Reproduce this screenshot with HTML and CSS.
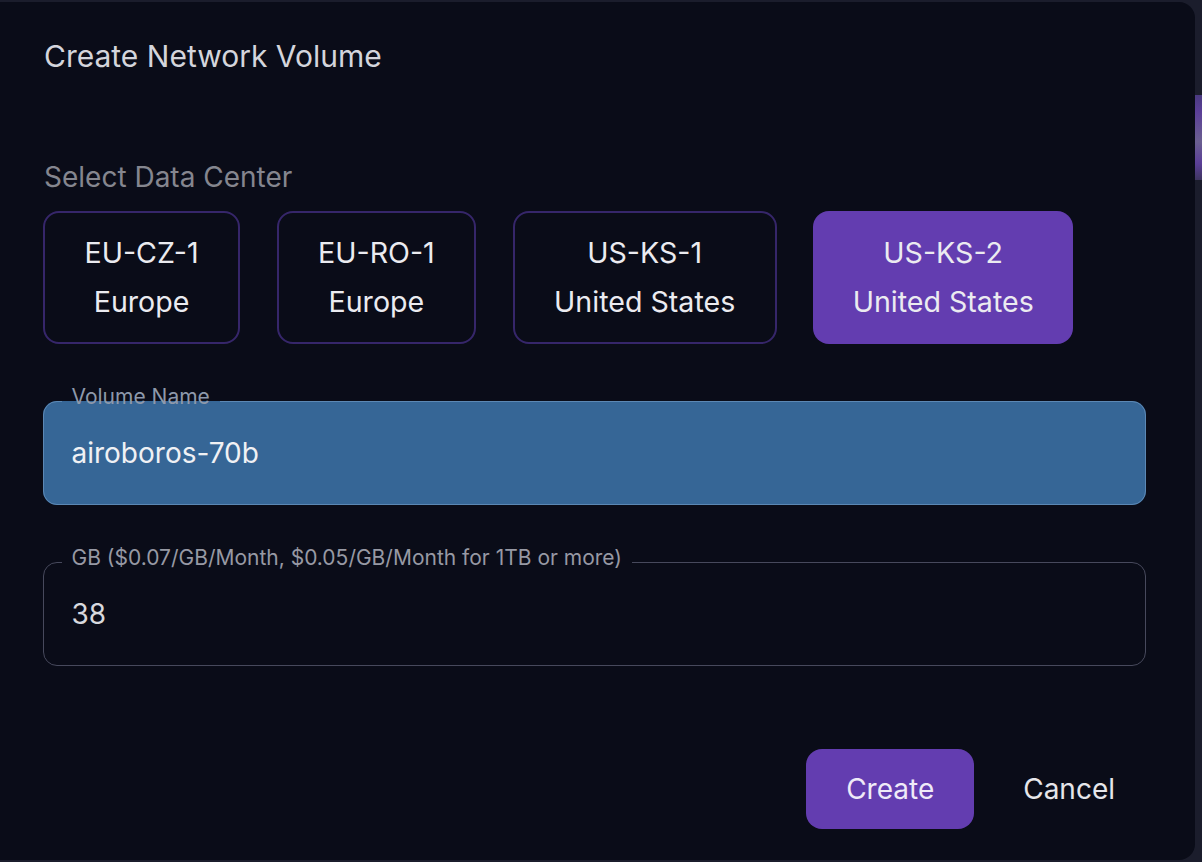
FILE: index.html
```html
<!DOCTYPE html>
<html lang="en">
<head>
<meta charset="utf-8">
<title>Create Network Volume</title>
<link rel="stylesheet" href="styles.css">
</head>
<body>
<div class="page">
  <div class="dialog">
    <h2 class="title">Create Network Volume</h2>
    <div class="section-label">Select Data Center</div>
    <div class="dc-list">
      <button class="dc"><span>EU-CZ-1</span><span>Europe</span></button>
      <button class="dc"><span>EU-RO-1</span><span>Europe</span></button>
      <button class="dc"><span>US-KS-1</span><span>United States</span></button>
      <button class="dc dc-selected"><span>US-KS-2</span><span>United States</span></button>
    </div>
    <fieldset class="field field-filled">
      <legend>Volume Name</legend>
      <div class="value">airoboros-70b</div>
    </fieldset>
    <fieldset class="field field-outline">
      <legend>GB ($0.07/GB/Month, $0.05/GB/Month for 1TB or more)</legend>
      <div class="value">38</div>
    </fieldset>
    <div class="actions">
      <button class="btn btn-primary">Create</button>
      <button class="btn btn-text">Cancel</button>
    </div>
  </div>
  <div class="side">
    <div class="glow"></div>
  </div>
</div>
</body>
</html>
```

FILE: styles.css
```css
* { box-sizing: border-box; }

html, body {
  margin: 0;
  padding: 0;
  background: #1b1d2c;
  font-family: Inter, "Noto Sans", "Liberation Sans", sans-serif;
}

.page {
  display: flex;
  width: 1202px;
  height: 862px;
  overflow: hidden;
}

.dialog {
  width: 1195px;
  flex: none;
  margin-top: 2px;
  height: 858px;
  background: #0a0c18;
  border-radius: 0 16px 16px 0;
  padding: 36px 49px 0 43px;
  display: flex;
  flex-direction: column;
}

.title {
  margin: 0 0 0 1px;
  font-size: 30px;
  line-height: 36px;
  font-weight: 400;
  color: #d4d5dc;
}

.section-label {
  margin: 88px 0 0 1px;
  font-size: 28px;
  line-height: 30px;
  color: #85868f;
}

.dc-list {
  display: flex;
  gap: 36.4px;
  margin-top: 19px;
}

.dc {
  display: flex;
  flex-direction: column;
  align-items: center;
  font-family: inherit;
  font-size: 28.6px;
  line-height: 49px;
  color: #ebebf0;
  background: transparent;
  border: 2px solid #36266a;
  border-radius: 16px;
  padding: 15px 39.5px 16px;
  cursor: pointer;
}

.dc-selected {
  background: #633db0;
  border: 0;
  padding: 17px 39.5px 18px;
}

.field {
  margin: 0;
  border-radius: 14px;
  padding: 21px 27.5px 36px;
  min-width: 0;
}

.field legend {
  font-size: 21px;
  line-height: 24px;
  padding: 0 10px 8px;
  margin-left: -10px;
}

.field-filled {
  margin-top: 41px;
  background: #366696;
  border: 1.5px solid #5c88b4;
}

.field-filled legend {
  color: #8e99ab;
}

.field-outline {
  margin-top: 41px;
  background: transparent;
  border: 1.5px solid #47495c;
}

.field-outline legend {
  color: #9799a4;
}

.value {
  font-size: 28px;
  line-height: 30px;
  color: #f0f1f4;
}

.field-outline .value {
  color: #d8d9de;
}

.actions {
  display: flex;
  justify-content: flex-end;
  gap: 10px;
  margin-top: 83px;
}

.btn {
  height: 80px;
  font-family: inherit;
  font-size: 28px;
  border: none;
  border-radius: 16px;
  cursor: pointer;
}

.btn-primary {
  width: 168px;
  background: #633db0;
  color: #efeaf8;
  padding: 0;
}

.btn-text {
  background: transparent;
  color: #e6e6ea;
  padding: 0 31px 0 39px;
}

.side {
  flex: 1;
  display: flex;
  flex-direction: column;
}

.glow {
  margin-top: 95px;
  height: 85px;
  background: linear-gradient(180deg, #4a3a80 0%, #5b3f98 20%, #6a5f90 55%, #5b3f98 80%, #3e3560 100%);
}
```
